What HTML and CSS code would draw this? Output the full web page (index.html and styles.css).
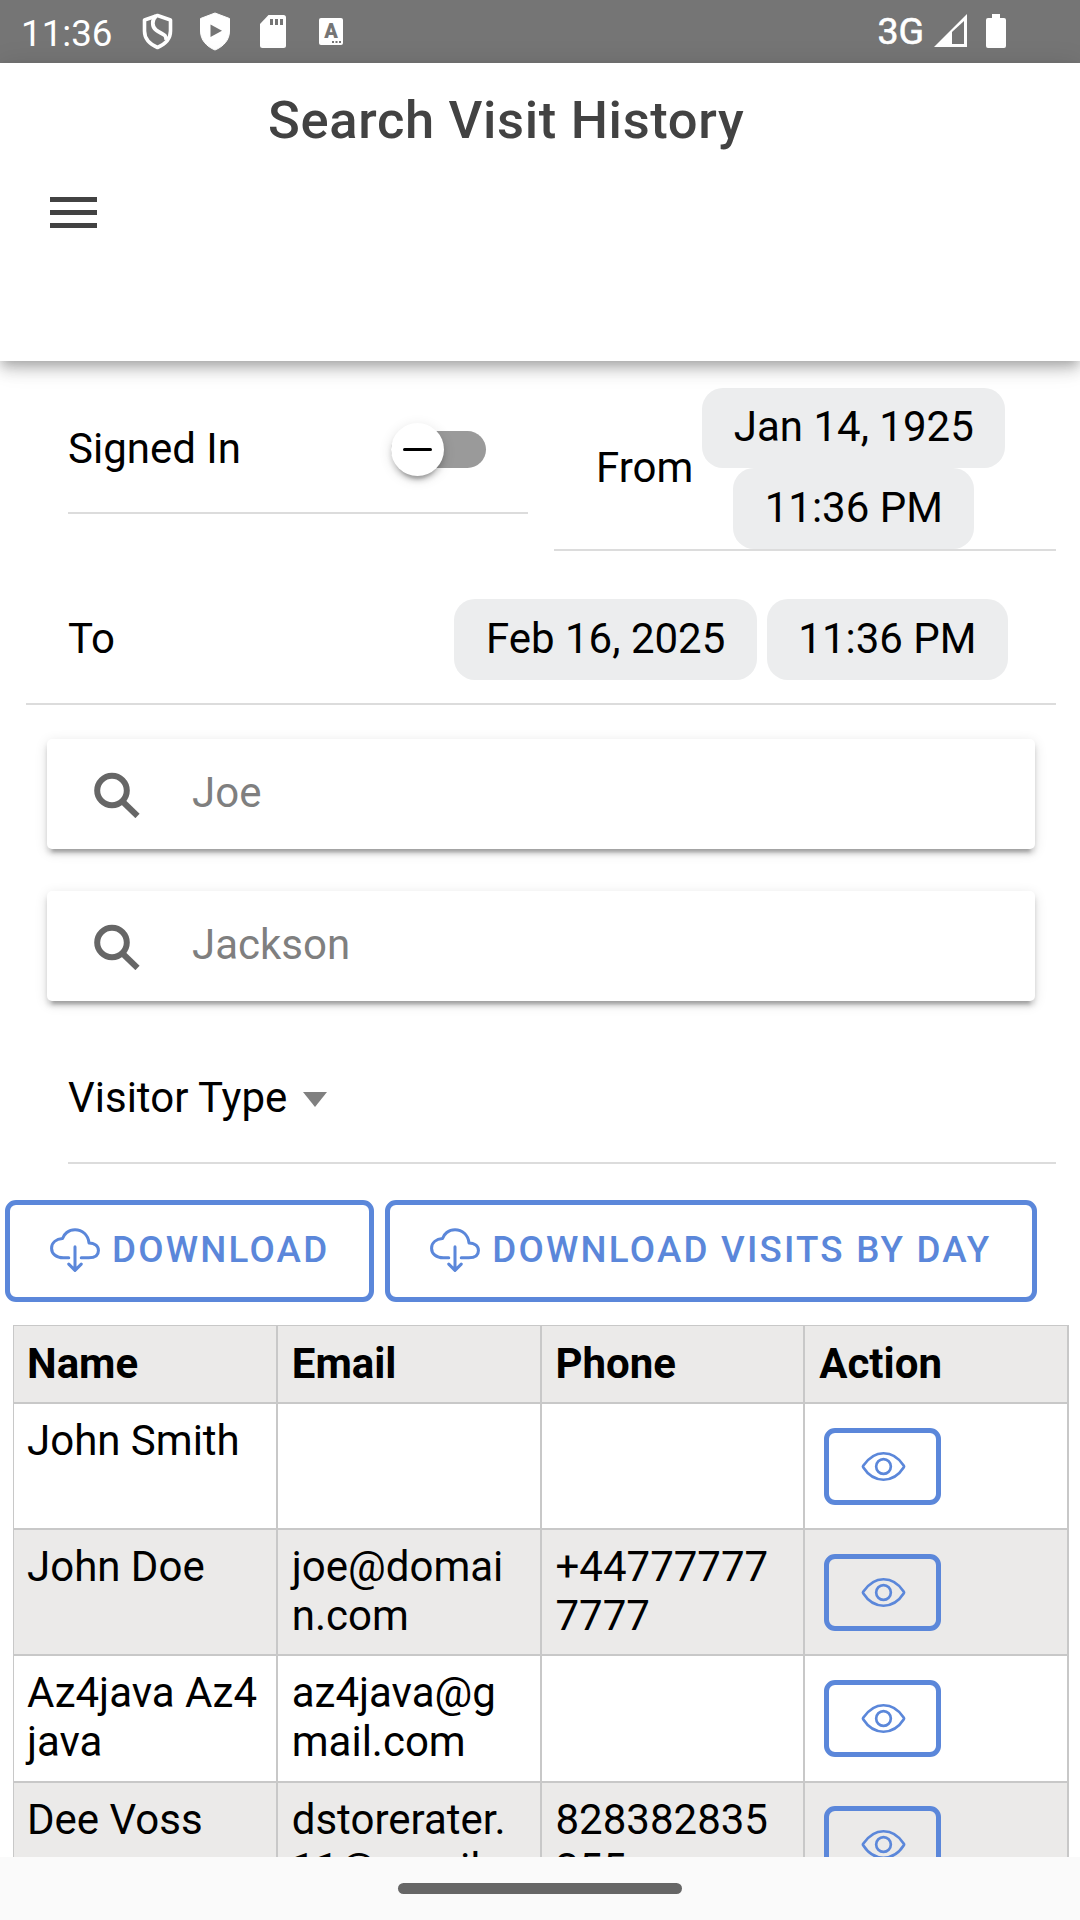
FILE: index.html
```html
<!DOCTYPE html>
<html lang="en">
<head>
  <meta charset="UTF-8" />
  <meta name="viewport" content="width=device-width, initial-scale=1.0"/>
  <title>Search Visit History</title>
  <link rel="stylesheet" href="styles.css">
</head>
<body>
  <!-- shared icons -->
  <svg class="defs" width="0" height="0">
    <symbol id="search" viewBox="0 0 46 46">
      <circle cx="18" cy="18.500" r="14.800" fill="none" stroke="currentColor" stroke-width="6"/>
      <path d="M27.500 28.500L43.500 44" fill="none" stroke="currentColor" stroke-width="6"/>
    </symbol>
    <symbol id="cloud" viewBox="0 0 512 512">
      <path d="M320 336h76c55 0 100-21.210 100-75.600s-53-73.470-96-75.600C391.110 99.740 329 48 256 48c-69 0-113.440 45.790-128 91.200-60 5.700-112 35.880-112 98.400S70 336 136 336h56M192 400.100l64 63.900 64-63.900M256 224v224" fill="none" stroke="currentColor" stroke-width="31" stroke-linecap="round" stroke-linejoin="round"/>
    </symbol>
    <symbol id="eye" viewBox="0 0 512 512">
      <path d="M255.660 112c-77.940 0-157.890 45.110-220.830 135.330a16 16 0 00-.27 17.770C82.920 340.800 161.800 400 255.660 400c92.840 0 173.340-59.380 221.790-135.250a16.140 16.140 0 000-17.470C428.890 172.280 347.800 112 255.660 112z" fill="none" stroke="currentColor" stroke-width="29" stroke-linejoin="round"/>
      <circle cx="256" cy="256" r="80" fill="none" stroke="currentColor" stroke-width="29"/>
    </symbol>
  </svg>

  <div class="status-bar">
    <span class="time">11:36</span>
    <svg class="notif" width="202" height="40" viewBox="142 12 202 40">
      <path d="M157.500 15.500L170.500 20V31C170.500 38.500 165.500 44 157.500 47.500C149.500 44 144.500 38.500 144.500 31V20Z" fill="none" stroke="#fff" stroke-width="3.600" stroke-linejoin="round"/>
      <path d="M156 16C151.500 20 152 27 156 30C161 34 167 34 166 40" fill="none" stroke="#fff" stroke-width="3.800"/>
      <path d="M215 13L229.500 18.500V31C229.500 40 223.500 46.500 215 50C206.500 46.500 200.500 40 200.500 31V18.500Z" fill="#fff" stroke="#fff" stroke-linejoin="round"/>
      <path d="M210.500 24.500V37L222 30.700Z" fill="#757575"/>
      <path d="M268.500 15H283.500Q286 15 286 17.500V45.500Q286 48 283.500 48H262.500Q260 48 260 45.500V24Z" fill="#fff"/>
      <path d="M270 19h3v6h-3zM275 19h3v6h-3zM280 19h3v6h-3z" fill="#757575"/>
      <rect x="319" y="18" width="24" height="27" rx="2" fill="#fff"/>
      <text x="331" y="38" class="lang">A</text>
      <path d="M332 41h2v2h-2zM335.500 41h2v2h-2zM339 41h2v2h-2z" fill="#757575"/>
    </svg>
    <span class="network">3G</span>
    <svg class="signal" width="34" height="34" viewBox="0 0 34 34">
      <path d="M0 33L33 0V33Z" fill="#fff"/>
      <path d="M18 18L30 7V30H18Z" fill="#757575"/>
    </svg>
    <svg class="battery" width="20" height="34" viewBox="0 0 20 34">
      <path d="M6 0h8v4h4q2 0 2 2v26q0 2-2 2H2q-2 0-2-2V6q0-2 2-2h4z" fill="#fff"/>
    </svg>
  </div>

  <header class="header">
    <h1>Search Visit History</h1>
    <div class="menu"><span></span><span></span><span></span></div>
  </header>

  <main class="content">
    <div class="filters">
      <div class="item signed-in">
        <span>Signed In</span>
        <div class="toggle"><div class="knob"></div></div>
      </div>
      <div class="item from">
        <span>From</span>
        <div class="chips stacked">
          <button class="chip">Jan 14, 1925</button>
          <button class="chip">11:36 PM</button>
        </div>
      </div>
    </div>

    <div class="item to">
      <span>To</span>
      <div class="chips">
        <button class="chip">Feb 16, 2025</button>
        <button class="chip">11:36 PM</button>
      </div>
    </div>

    <div class="searchbar">
      <svg><use href="#search"/></svg>
      <input type="text" placeholder="Joe">
    </div>
    <div class="searchbar">
      <svg><use href="#search"/></svg>
      <input type="text" placeholder="Jackson">
    </div>

    <div class="item visitor-type">
      <span>Visitor Type</span>
      <i class="caret"></i>
    </div>

    <div class="actions">
      <button class="btn"><svg><use href="#cloud"/></svg>DOWNLOAD</button>
      <button class="btn"><svg><use href="#cloud"/></svg>DOWNLOAD VISITS BY DAY</button>
    </div>

    <div class="table">
      <div class="row head">
        <div>Name</div><div>Email</div><div>Phone</div><div>Action</div>
      </div>
      <div class="row">
        <div>John Smith</div><div></div><div></div>
        <div><button class="view"><svg><use href="#eye"/></svg></button></div>
      </div>
      <div class="row">
        <div>John Doe</div><div>joe@domain.com</div><div>+447777777777</div>
        <div><button class="view"><svg><use href="#eye"/></svg></button></div>
      </div>
      <div class="row">
        <div>Az4java Az4java</div><div>az4java@gmail.com</div><div></div>
        <div><button class="view"><svg><use href="#eye"/></svg></button></div>
      </div>
      <div class="row">
        <div>Dee Voss</div><div>dstorerater.11@gmail.com</div><div>828382835355</div>
        <div><button class="view"><svg><use href="#eye"/></svg></button></div>
      </div>
    </div>
  </main>

  <div class="nav-bar"><div class="pill"></div></div>
</body>
</html>
```
FILE: styles.css
```css
:root {
  --primary: #5b87da;
  --line: #dcdcdc;
  --cell: #c8c8c8;
  --stripe: #ebeae9;
}
* { box-sizing: border-box; font-family: Roboto, sans-serif; }
body {
  margin: 0;
  width: 1080px;
  height: 1920px;
  overflow: hidden;
  display: flex;
  flex-direction: column;
  background: #fff;
  color: #000;
  font-size: 42px;
  line-height: 49px;
}
button { padding: 0; border: none; background: none; }
svg { display: block; flex: none; }
.defs { position: absolute; }

.status-bar {
  flex: none;
  height: 63px;
  padding: 0 74px 0 21px;
  display: flex;
  align-items: center;
  background: #757575;
  color: #fff;
}
.time { font-size: 36.75px; width: 121px; padding-top: 3px; }
.notif { margin-top: 1px; }
.lang { font-size: 20px; font-weight: 900; fill: #757575; text-anchor: middle; }
.network {
  margin-left: auto;
  font-size: 37.500px;
  -webkit-text-stroke: .6px #fff;
}
.signal { margin-left: 10px; margin-bottom: 1px; }
.battery { margin-left: 18px; margin-bottom: 1px; }

.header {
  flex: none;
  height: 298px;
  padding-top: 26px;
  background: #fff;
  position: relative;
  z-index: 1;
  box-shadow: 0 5px 10px -3px rgba(0,0,0,.2), 0 10px 13px rgba(0,0,0,.14), 0 3px 26px rgba(0,0,0,.12);
}
h1 {
  margin: 0 0 0 268px;
  font-size: 52.5px;
  font-weight: 500;
  line-height: 62px;
  letter-spacing: .66px;
  color: #424242;
}
.menu {
  width: 47.500px;
  margin: 45.500px 0 0 49.500px;
  display: grid;
  gap: 8px;
}
.menu span { height: 5px; background: #424242; }

.content {
  flex: 1;
  min-height: 0;
  overflow: hidden;
}
.filters {
  display: flex;
  align-items: flex-start;
  justify-content: space-between;
  padding: 26px 24px 0 68px;
}
.item {
  display: flex;
  align-items: center;
  border-bottom: 2px solid var(--line);
}
.item > span { padding-bottom: 2px; }
.signed-in {
  width: 460px;
  height: 127px;
  padding-right: 42px;
  justify-content: space-between;
}
.toggle {
  width: 95px;
  height: 37px;
  border-radius: 19px;
  background: #9a9a9a;
  display: flex;
  align-items: center;
}
.knob {
  width: 53px;
  height: 53px;
  border-radius: 50%;
  background: #fff;
  flex: none;
  display: grid;
  place-items: center;
  box-shadow: 0 8px 3px -5px rgba(0,0,0,.2), 0 5px 5px rgba(0,0,0,.14), 0 3px 13px rgba(0,0,0,.12);
}
.knob::before {
  content: "";
  width: 29px;
  height: 3px;
  border-radius: 2px;
  background: #000;
}
.from {
  width: 502px;
  height: 164px;
  padding-left: 42px;
  gap: 9px;
}
.chips { display: flex; gap: 10px; }
.stacked {
  flex-direction: column;
  align-items: center;
  gap: 0;
}
.chip {
  height: 80.500px;
  padding: 0 31.500px 2px;
  border-radius: 21px;
  background: #ecedee;
  color: #000;
  font-size: 42px;
  line-height: 49px;
}
.to {
  height: 154px;
  margin: 0 24px 34px 26px;
  padding: 25px 48px 0 42px;
  justify-content: space-between;
}
.searchbar {
  width: 988px;
  height: 110px;
  margin: 0 0 42px 47px;
  padding-left: 47px;
  display: flex;
  align-items: center;
  border-radius: 5px;
  background: #fff;
  box-shadow: 0 8px 3px -5px rgba(0,0,0,.2), 0 5px 5px rgba(0,0,0,.14), 0 3px 13px rgba(0,0,0,.12);
}
.searchbar svg { width: 46px; height: 46px; margin-top: 1px; color: #666; }
.searchbar input {
  flex: 1;
  margin-left: 52px;
  padding: 0 0 4px;
  border: none;
  outline: none;
  background: none;
  font-size: 42px;
}
.searchbar input::placeholder { color: #7f7f7f; opacity: 1; }
.visitor-type {
  height: 121px;
  margin: 0 24px 0 68px;
  padding-bottom: 8px;
}
.caret {
  margin: 1px 0 0 16px;
  border: 12.500px solid transparent;
  border-top: 15px solid #808080;
  border-bottom: none;
}

.actions {
  display: flex;
  gap: 11px;
  padding: 36px 0 0 5px;
}
.btn {
  height: 102px;
  padding: 0 40px 4px 40px;
  display: flex;
  align-items: center;
  gap: 12px;
  border: 5px solid var(--primary);
  border-radius: 11px;
  color: var(--primary);
  font-size: 36.75px;
  font-weight: 500;
  letter-spacing: 2.200px;
}
.btn svg { width: 50px; height: 50px; margin-top: 2px; }

.table {
  margin: 23px 11px 0 13px;
  border: 1px solid var(--cell);
  border-width: 1px 0 0 1px;
}
.row {
  display: grid;
  grid-template-columns: repeat(4, 1fr);
  min-height: 126.200px;
}
.row > div {
  padding: 12px 12px 12px 14px;
  border: solid var(--cell);
  border-width: 0 2px 2px 0;
  word-break: break-all;
}
.row > div:first-child { padding-left: 13px; }
.row:nth-child(odd) { background: var(--stripe); }
.row.head { min-height: 78px; font-weight: 700; }
.row.head > div { padding-top: 13px; padding-bottom: 11px; }
.view {
  width: 117px;
  height: 77px;
  margin: 11.500px 0 0 5px;
  display: grid;
  place-items: center;
  border: 5px solid var(--primary);
  border-radius: 11px;
  color: var(--primary);
}
.view svg { width: 47px; height: 47px; margin-left: 1px; }

.nav-bar {
  flex: none;
  height: 63px;
  padding-top: 26px;
  background: #fafafa;
}
.pill {
  width: 284px;
  height: 11px;
  margin: 0 auto;
  border-radius: 6px;
  background: #666;
}
```
